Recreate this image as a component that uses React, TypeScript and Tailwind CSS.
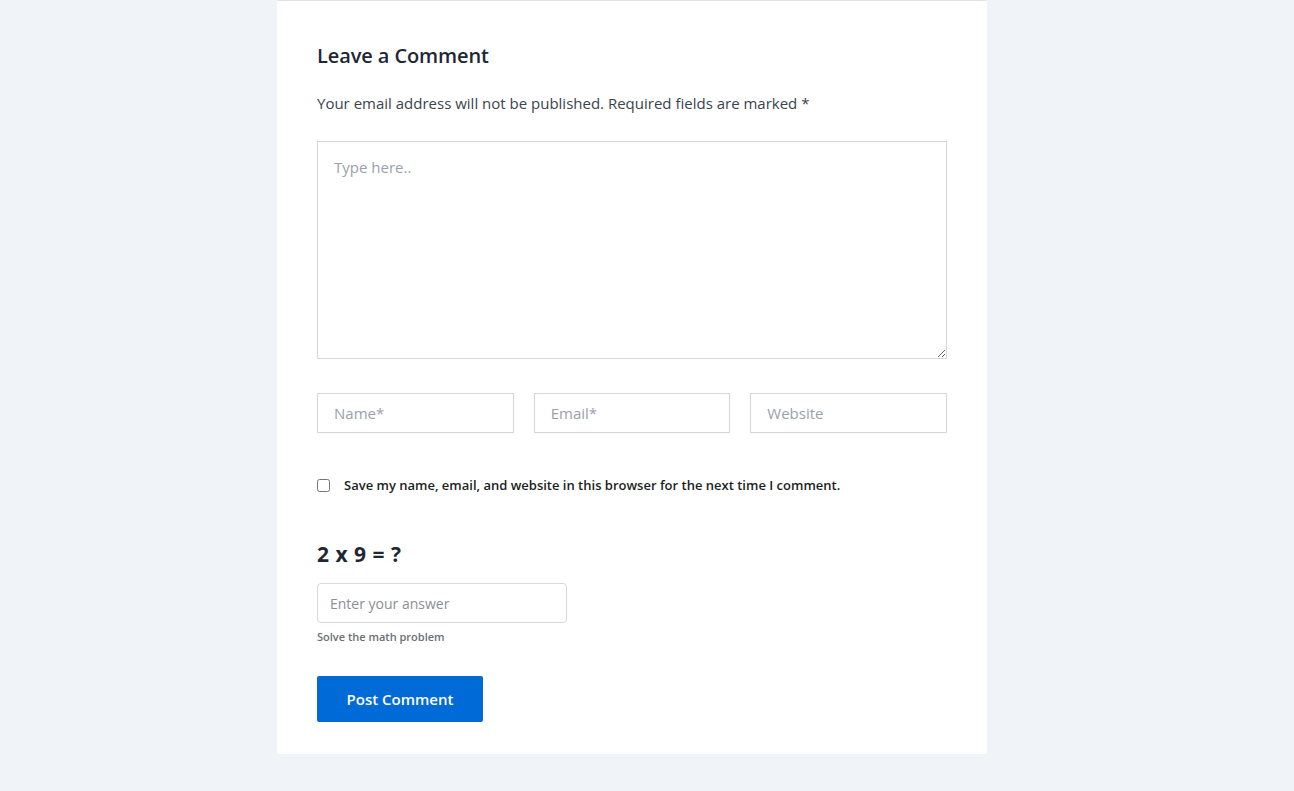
import React from "react";

export default function App() {
  return (
    <div className="min-h-[791px] w-full bg-[#f0f4f8]" style={{ fontFamily: '"Open Sans", "Noto Sans", sans-serif' }}>
      <div className="ml-[277px] w-[710px] bg-white border-t border-[#dde3ea] px-10 pt-[40px] pb-[32px]">
        <h3 className="text-[20px] font-semibold leading-[30px] text-[#1e2733] tracking-[-0.1px]">Leave a Comment</h3>
        <p className="mt-[20px] text-[15px] leading-[24px] text-[#3a4350]">
          Your email address will not be published. Required fields are marked *
        </p>
        <textarea
          placeholder="Type here.."
          className="mt-[26px] block w-full h-[218px] border border-[#d3d6dc] px-4 py-[14px] text-[15px] text-[#333] placeholder:text-[#9aa1ab] outline-none"
        />
        <div className="mt-[34px] grid grid-cols-3 gap-5">
          <input placeholder="Name*" className="h-10 border border-[#d3d6dc] px-4 text-[15px] placeholder:text-[#9aa1ab] outline-none" />
          <input placeholder="Email*" className="h-10 border border-[#d3d6dc] px-4 text-[15px] placeholder:text-[#9aa1ab] outline-none" />
          <input placeholder="Website" className="h-10 border border-[#d3d6dc] px-4 text-[15px] placeholder:text-[#9aa1ab] outline-none" />
        </div>
        <label className="mt-[42px] flex items-center gap-[14px] text-[13px] font-semibold text-[#1b1f24]">
          <input type="checkbox" className="m-0 h-[13px] w-[13px]" />
          <span className="leading-[20px]">Save my name, email, and website in this browser for the next time I comment.</span>
        </label>
        <div className="mt-[44px] text-[21px] font-bold leading-[30px] text-[#1e2733] tracking-[0.5px]">2 x 9 = ?</div>
        <input
          placeholder="Enter your answer"
          className="mt-[14px] block h-10 w-[250px] rounded-[4px] border border-[#d9d9d9] px-3 text-[14px] placeholder:text-[#8a8f96] outline-none"
        />
        <div className="mt-[6px] text-[11px] font-semibold leading-[16px] text-[#6b6f75]">Solve the math problem</div>
        <button className="mt-[31px] block h-[46px] w-[166px] rounded-[2px] bg-[#006bd6] text-[15px] font-semibold text-white">
          Post Comment
        </button>
      </div>
    </div>
  );
}
